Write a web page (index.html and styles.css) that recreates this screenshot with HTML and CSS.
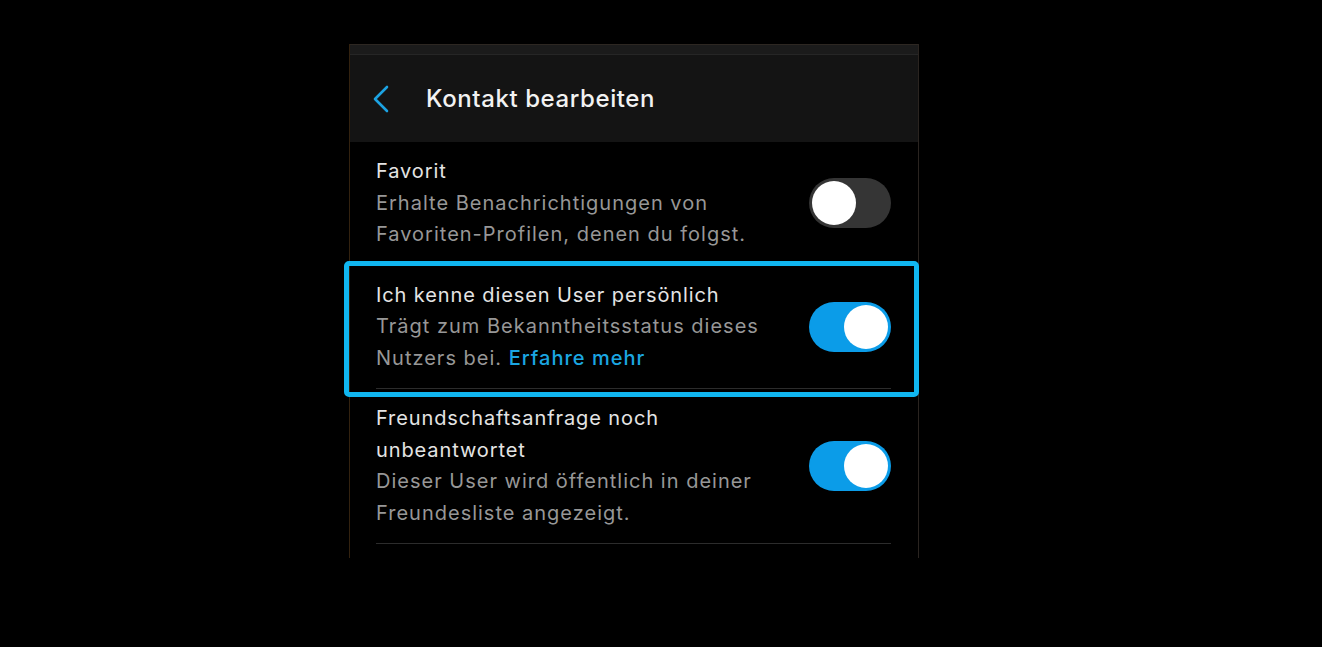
FILE: index.html
```html
<!DOCTYPE html>
<html lang="de">
<head>
    <meta charset="UTF-8">
    <meta name="viewport" content="width=device-width, initial-scale=1.0">
    <title>Kontakt bearbeiten</title>
    <link rel="stylesheet" href="styles.css">
</head>
<body>
    <div class="screen">
        <div class="status-strip"></div>
        <div class="header">
            <svg class="back" width="18" height="28" viewBox="0 0 18 28">
                <path d="M15 2 L3 14 L15 26" fill="none" stroke="#1ca3e2" stroke-width="2.6" stroke-linecap="round" stroke-linejoin="round"/>
            </svg>
            <h1>Kontakt bearbeiten</h1>
        </div>

        <div class="list">
            <div class="row">
                <div class="row-text">
                    <div class="row-title">Favorit</div>
                    <div class="row-sub">Erhalte Benachrichtigungen von Favoriten-Profilen, denen du folgst.</div>
                </div>
                <div class="toggle"><span></span></div>
            </div>
            <div class="row">
                <div class="row-text">
                    <div class="row-title">Ich kenne diesen User persönlich</div>
                    <div class="row-sub">Trägt zum Bekanntheitsstatus dieses Nutzers bei. <a href="#" class="link">Erfahre mehr</a></div>
                </div>
                <div class="toggle on"><span></span></div>
            </div>
            <div class="row">
                <div class="row-text">
                    <div class="row-title">Freundschaftsanfrage noch unbeantwortet</div>
                    <div class="row-sub">Dieser User wird öffentlich in deiner Freundesliste angezeigt.</div>
                </div>
                <div class="toggle on"><span></span></div>
            </div>
        </div>

        <!-- highlight frame drawn over the second row -->
        <div class="highlight"></div>
    </div>
</body>
</html>
```

FILE: styles.css
```css
body {
    margin: 0;
    background-color: #000;
    font-family: Inter, "Noto Sans", sans-serif;
}

.screen {
    position: relative;
    width: 568px;
    height: 514px;
    margin: 44px 0 0 349px;
    border-left: 1px solid #33220f;
    border-right: 1px solid #2a2420;
    background-color: #000;
}

.status-strip {
    height: 9px;
    background-color: #1b1b1b;
    border-top: 1px solid #2d2722;
}

.header {
    display: flex;
    align-items: center;
    height: 87px;
    padding-left: 22px;
    background-color: #141414;
    border-top: 1px solid #262626;
}

.back {
    display: block;
    margin-right: 36px;
}

.header h1 {
    margin: 0;
    font-size: 24px;
    font-weight: 500;
    color: #f2f2f2;
    letter-spacing: 0.6px;
}

.list {
    padding: 0 27px 0 26px;
}

.row {
    display: flex;
    align-items: center;
    justify-content: space-between;
    padding: 14px 0 14px;
    border-bottom: 1px solid #2c2c2c;
}

.row-text {
    max-width: 400px;
    font-size: 20px;
    line-height: 31.5px;
}

.row-title {
    color: #e4e4e4;
    letter-spacing: 0.9px;
}

.row-sub {
    color: #979797;
    letter-spacing: 1px;
}

.link {
    color: #1ba6e2;
    font-weight: 500;
    text-decoration: none;
}

/* Switch */
.toggle {
    position: relative;
    flex-shrink: 0;
    width: 82px;
    height: 50px;
    border-radius: 25px;
    background-color: #353535;
}

.toggle span {
    position: absolute;
    top: 3px;
    left: 3px;
    width: 44px;
    height: 44px;
    border-radius: 50%;
    background-color: #fff;
}

.toggle.on {
    background-color: #0b9ce8;
}

.toggle.on span {
    left: 35px;
}

.highlight {
    position: absolute;
    left: -6px;
    top: 217px;
    width: 565px;
    height: 126px;
    border: 5px solid #10b6f0;
    border-radius: 5px;
}
```
